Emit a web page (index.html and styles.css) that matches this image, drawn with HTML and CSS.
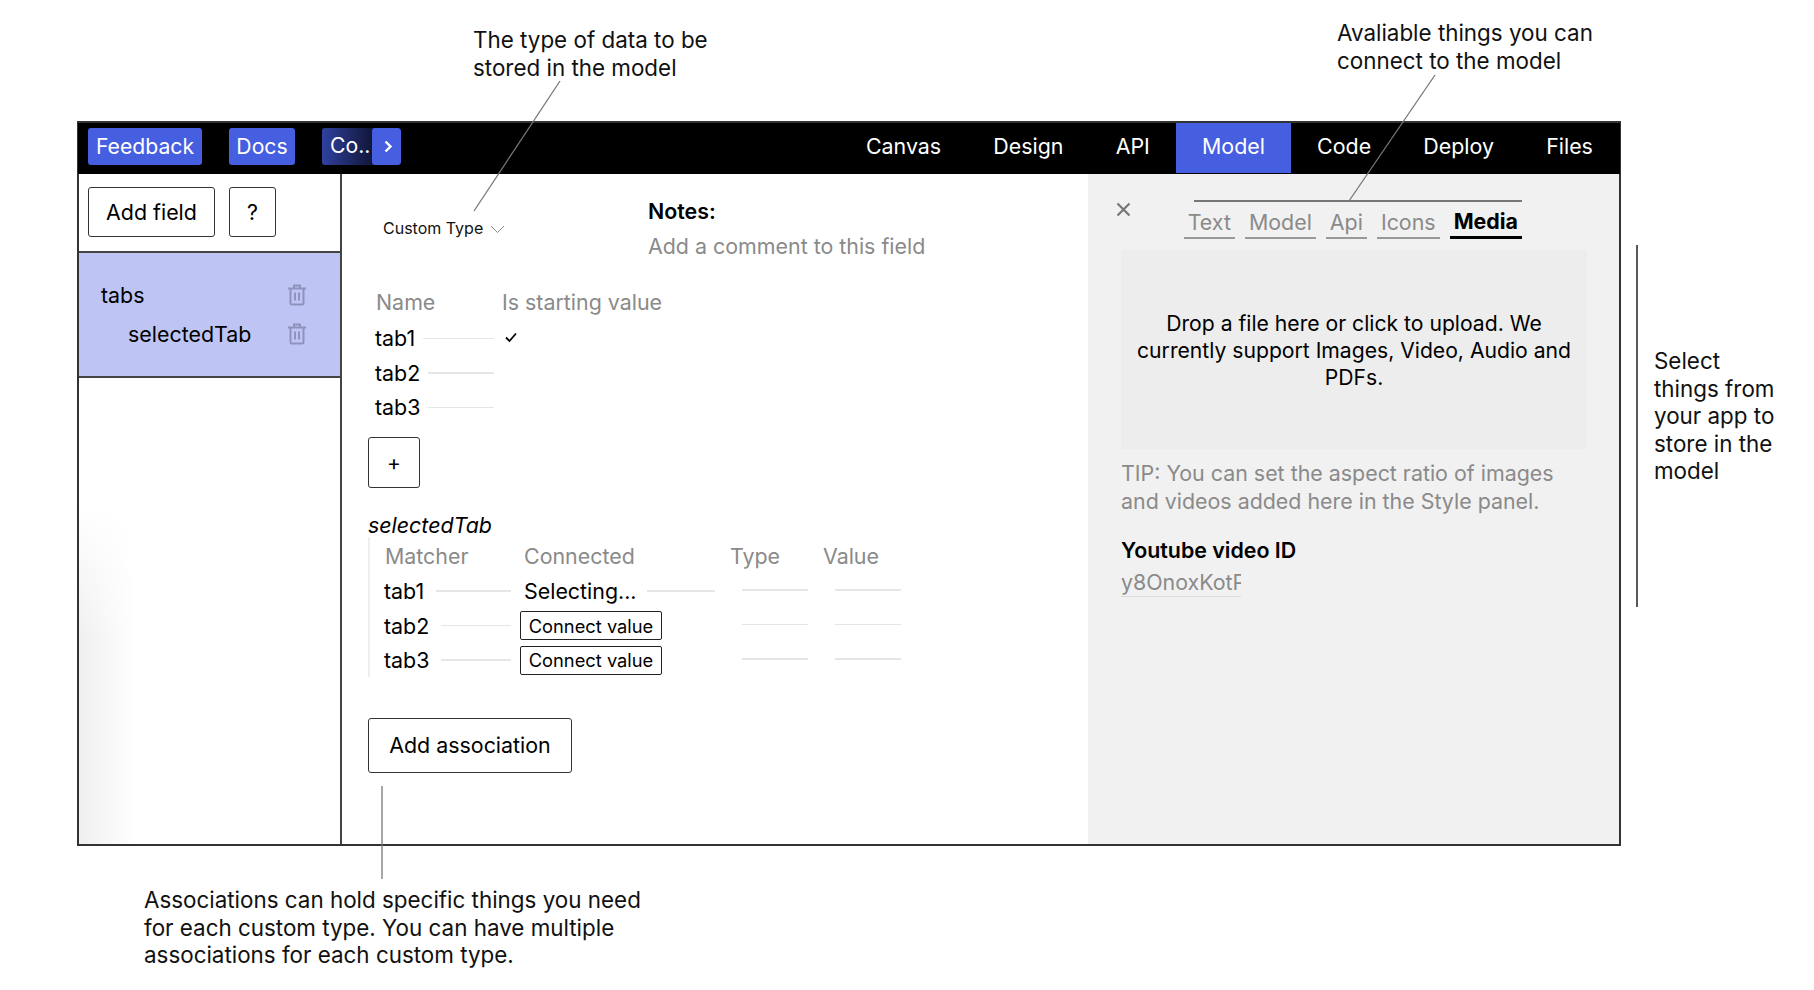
FILE: index.html
```html
<!DOCTYPE html>
<html lang="en">
<head>
<meta charset="utf-8">
<title>Model editor</title>
<link rel="stylesheet" href="styles.css">
</head>
<body>
<div class="app">
  <header class="topbar">
    <div class="quick">
      <button class="pill pill-feedback">Feedback</button>
      <button class="pill pill-docs">Docs</button>
      <div class="collapsed">
        <span class="collapsed-label">Co...</span>
        <span class="collapsed-arrow"><svg width="12" height="15" viewBox="0 0 12 15"><path d="M3.500 2.500 8.500 7.500l-5 5" fill="none" stroke="#fff" stroke-width="2.400"/></svg></span>
      </div>
    </div>
    <nav class="nav">
      <a class="nav-item">Canvas</a>
      <a class="nav-item">Design</a>
      <a class="nav-item">API</a>
      <a class="nav-item active">Model</a>
      <a class="nav-item">Code</a>
      <a class="nav-item">Deploy</a>
      <a class="nav-item">Files</a>
    </nav>
  </header>
  <div class="workspace">
    <aside class="sidebar">
      <div class="side-actions">
        <button class="btn add-field">Add field</button>
        <button class="btn help">?</button>
      </div>
      <div class="field-list">
        <div class="field"><span>tabs</span>
          <svg class="trash" width="20" height="22" viewBox="0 0 20 22"><path d="M1 4.500h18M7 4.500V1.500h6v3M3.500 4.500h13V19a1.500 1.500 0 0 1-1.500 1.500H5A1.500 1.500 0 0 1 3.500 19zM8 8.500v8M12 8.500v8" fill="none" stroke="currentColor" stroke-width="2"/></svg>
        </div>
        <div class="field nested"><span>selectedTab</span>
          <svg class="trash" width="20" height="22" viewBox="0 0 20 22"><path d="M1 4.500h18M7 4.500V1.500h6v3M3.500 4.500h13V19a1.500 1.500 0 0 1-1.500 1.500H5A1.500 1.500 0 0 1 3.500 19zM8 8.500v8M12 8.500v8" fill="none" stroke="currentColor" stroke-width="2"/></svg>
        </div>
      </div>
      <div class="side-empty"><div class="side-shade"></div></div>
    </aside>
    <main class="editor">
      <div class="editor-top">
        <div class="type-select">Custom Type
          <svg width="15" height="9" viewBox="0 0 15 9"><path d="M1 1l6.500 6.500L14 1" fill="none" stroke="#8a8a8a" stroke-width="1"/></svg>
        </div>
        <div class="notes">
          <div class="notes-title">Notes:</div>
          <div class="notes-hint">Add a comment to this field</div>
        </div>
      </div>
      <div class="values-head"><span class="muted col-name">Name</span><span class="muted">Is starting value</span></div>
      <div class="value-row"><div class="value-name"><span>tab1</span><i class="rule"></i></div>
        <svg class="check" width="14" height="12" viewBox="0 0 14 12"><path d="M2 6.500 5.500 10 12 2.500" fill="none" stroke="#000" stroke-width="1.800"/></svg>
      </div>
      <div class="value-row"><div class="value-name"><span>tab2</span><i class="rule"></i></div></div>
      <div class="value-row"><div class="value-name"><span>tab3</span><i class="rule"></i></div></div>
      <button class="btn plus">+</button>
      <div class="assoc-name">selectedTab</div>
      <div class="assoc">
        <div class="assoc-head">
          <span class="muted">Matcher</span><span class="muted">Connected</span><span class="muted">Type</span><span class="muted">Value</span>
        </div>
        <div class="assoc-row">
          <div class="cell-line"><span>tab1</span><i class="rule"></i></div>
          <div class="cell-conn"><span class="selecting">Selecting...</span><i class="rule"></i></div>
          <i class="rule fixed"></i><i class="rule fixed"></i>
        </div>
        <div class="assoc-row">
          <div class="cell-line"><span>tab2</span><i class="rule"></i></div>
          <div class="cell-conn"><button class="connect">Connect value</button></div>
          <i class="rule fixed"></i><i class="rule fixed"></i>
        </div>
        <div class="assoc-row">
          <div class="cell-line"><span>tab3</span><i class="rule"></i></div>
          <div class="cell-conn"><button class="connect">Connect value</button></div>
          <i class="rule fixed"></i><i class="rule fixed"></i>
        </div>
      </div>
      <button class="btn add-assoc">Add association</button>
    </main>
    <section class="panel">
      <div class="panel-top">
        <svg class="close" width="15" height="15" viewBox="0 0 15 15"><path d="M1.500 1.500l12 12M13.500 1.500l-12 12" stroke="#777" stroke-width="2.200"/></svg>
        <div class="tabs">
          <span class="tab">Text</span>
          <span class="tab">Model</span>
          <span class="tab">Api</span>
          <span class="tab">Icons</span>
          <span class="tab current">Media</span>
        </div>
      </div>
      <div class="dropzone">Drop a file here or click to upload. We currently support Images, Video, Audio and PDFs.</div>
      <p class="tip">TIP: You can set the aspect ratio of images and videos added here in the Style panel.</p>
      <div class="yt-label">Youtube video ID</div>
      <input class="yt-input" type="text" value="y8OnoxKotPQ" readonly>
    </section>
  </div>
</div>

<p class="note note-type">The type of data to be<br>stored in the model</p>
<p class="note note-things">Avaliable things you can<br>connect to the model</p>
<p class="note note-select">Select<br>things from<br>your app to<br>store in the<br>model</p>
<p class="note note-assoc">Associations can hold specific things you need<br>for each custom type. You can have multiple<br>associations for each custom type.</p>

<svg class="leaders" width="1814" height="990" viewBox="0 0 1814 990">
  <path d="M560 81 474 211" stroke="#777" stroke-width="1.300" fill="none"/>
  <path d="M1435 75 1349 201" stroke="#777" stroke-width="1.300" fill="none"/>
  <path d="M382 786V879" stroke="#777" stroke-width="1.300" fill="none"/>
  <path d="M1637 245V607" stroke="#222" stroke-width="1.500" fill="none"/>
</svg>
</body>
</html>
```

FILE: styles.css
```css
* { box-sizing: border-box; }
html, body { margin: 0; padding: 0; }
body {
  position: relative;
  width: 1814px;
  height: 990px;
  overflow: hidden;
  background: #fff;
  color: #000;
  font-family: Inter, "Liberation Sans", sans-serif;
  font-size: 21.400px;
  padding: 121px 0 0 77px;
}
button { font: inherit; color: inherit; background: #fff; cursor: pointer; }

.app {
  width: 1544px;
  height: 725px;
  border: 2px solid #333;
  display: flex;
  flex-direction: column;
}

.topbar {
  height: 51px;
  margin: 0 -1px;
  background: #000;
  display: flex;
  justify-content: space-between;
  flex: none;
}
.quick { display: flex; align-items: flex-start; gap: 27px; padding: 5px 0 0 10px; }
.pill {
  height: 37px;
  padding: 0 0 2px;
  border: 0;
  border-radius: 3px;
  background: #465ee0;
  color: #fff;
  font-size: 21.200px;
}
.pill-feedback { width: 114px; }
.pill-docs { width: 66px; }
.collapsed {
  width: 79px;
  height: 37px;
  border-radius: 3px;
  position: relative;
  overflow: hidden;
  background: linear-gradient(to right, #2f419f, #111638 64%);
  color: #fff;
  font-size: 21.200px;
  line-height: 35px;
  padding-left: 8px;
}
.collapsed-label { white-space: nowrap; }
.collapsed-arrow {
  position: absolute;
  right: 0;
  top: 0;
  width: 29px;
  height: 37px;
  padding-left: 2px;
  background: #465ee0;
  border-radius: 3px;
  display: flex;
  align-items: center;
  justify-content: center;
}
.nav { display: flex; padding-right: 1px; }
.nav-item {
  height: 50px;
  display: flex;
  align-items: center;
  padding: 0 26.100px 4px;
  color: #fff;
}
.active { background: #465ee0; }

.workspace { flex: 1; display: flex; min-height: 0; }

.sidebar {
  width: 263px;
  flex: none;
  border-right: 2px solid #444;
  display: flex;
  flex-direction: column;
}
.side-actions {
  height: 79px;
  display: flex;
  gap: 14px;
  padding: 13px 0 0 9px;
  border-bottom: 2px solid #444;
}
.btn { border: 1.500px solid #333; border-radius: 3px; background: #fff; }
.add-field { width: 127px; height: 50px; }
.help { width: 47px; height: 50px; }
.field-list {
  height: 125px;
  background: #bec5f4;
  border-bottom: 2px solid #444;
  padding: 23px 33px 0 22px;
}
.field { height: 38.500px; display: flex; align-items: center; justify-content: space-between; }
.nested { padding-left: 27px; }
.trash { color: #8d93bb; }
.side-empty { flex: 1; position: relative; }
.side-shade {
  position: absolute;
  left: 0;
  bottom: 0;
  width: 56px;
  height: 340px;
  background: linear-gradient(to right, #efefef, #fff);
  -webkit-mask-image: linear-gradient(to bottom, transparent, #000 40%);
  mask-image: linear-gradient(to bottom, transparent, #000 40%);
}

.editor { flex: none; width: 746px; padding: 23px 0 0 26px; }
.editor-top { display: flex; height: 63px; }
.type-select {
  width: 265px;
  height: 28px;
  margin: 17px 0 0 15px;
  font-size: 16px;
  line-height: 28px;
  color: #111;
  flex: none;
}
.type-select svg { margin-left: 2px; }
.notes { flex: 1; }
.notes-title { font-weight: 600; line-height: 28px; }
.notes-hint { margin-top: 7px; line-height: 28px; color: #8a8a8a; }
.muted { color: #8a8a8a; }
.values-head { display: flex; height: 28px; margin-top: 28px; line-height: 28px; padding-left: 8px; }
.col-name { width: 126px; }
.value-row { display: flex; align-items: center; height: 34.600px; margin-left: 7px; }
.values-head + .value-row { margin-top: 5px; }
.value-name { width: 119px; display: flex; align-items: center; gap: 8px; flex: none; }
.rule { display: block; flex: 1; height: 1.500px; background: #e6e6e6; }
.check { margin-left: 10px; margin-top: -2px; }
.plus { display: block; width: 52px; height: 51px; margin-top: 12px; font-size: 21px; }
.assoc-name { height: 28px; line-height: 28px; margin-top: 23px; font-style: italic; }
.assoc {
  margin-top: -2px;
  padding-top: 5px;
  height: 140px;
  border-left: 2px solid #eee;
}
.assoc-head {
  display: grid;
  grid-template-columns: 139px 206px 93px auto;
  width: 520px;
  height: 28px;
  line-height: 28px;
  margin: 0 0 4px 15px;
}
.assoc-row {
  display: grid;
  grid-template-columns: 127px 231px 93px 66px;
  align-items: center;
  height: 34.500px;
  padding-left: 14px;
}
.cell-line { display: flex; align-items: center; gap: 12px; }
.cell-conn { display: flex; align-items: center; gap: 10px; width: 195px; margin-left: 9px; }
.selecting { padding-left: 4px; white-space: nowrap; }
.fixed { width: 66px; flex: none; margin-top: -2px; }
.connect {
  width: 142px;
  height: 29px;
  padding: 0;
  border: 1.500px solid #222;
  border-radius: 2px;
  font-size: 18.300px;
}
.add-assoc { display: block; width: 204px; height: 55px; margin-top: 41px; }

.panel { flex: 1; min-width: 0; background: #f1f1f1; padding: 0 0 0 33px; display: flex; flex-direction: column; }
.panel-top { height: 76px; display: flex; align-items: flex-start; padding-top: 26px; flex: none; }
.close { margin: 2px 0 0 -5px; flex: none; }
.tabs {
  margin-left: 63px;
  width: 328px;
  flex: none;
  display: flex;
  justify-content: flex-end;
  gap: 10px;
  border-top: 2px solid #777;
  padding-top: 7px;
}
.tab {
  height: 30px;
  line-height: 26px;
  padding: 0 4px;
  border-bottom: 2px solid #999;
  color: #8a8a8a;
  flex: none;
}
.current { color: #000; font-weight: 700; line-height: 24px; border-bottom: 3px solid #000; }
.dropzone {
  width: 466px;
  height: 199px;
  background: #ededed;
  display: flex;
  align-items: center;
  text-align: center;
  padding: 2px 10px 0;
  font-size: 21.150px;
  line-height: 27px;
  flex: none;
}
.tip { margin: 10px 0 0; width: 440px; line-height: 28px; color: #8a8a8a; }
.yt-label { margin-top: 21px; font-weight: 600; line-height: 28px; }
.yt-input {
  display: block;
  margin-top: 3px;
  width: 120px;
  height: 30px;
  padding: 0;
  font: inherit;
  color: #8a8a8a;
  background: transparent;
  border: 0;
  border-bottom: 1.500px solid #ddd;
  outline: 0;
}

.note {
  position: absolute;
  margin: 0;
  font-size: 22.400px;
  line-height: 27.500px;
  color: #111;
}
.note-type { left: 473px; top: 26px; }
.note-things { left: 1337px; top: 19px; }
.note-select { left: 1654px; top: 347px; }
.note-assoc { left: 144px; top: 886px; }
.leaders { position: absolute; left: 0; top: 0; pointer-events: none; }
```
